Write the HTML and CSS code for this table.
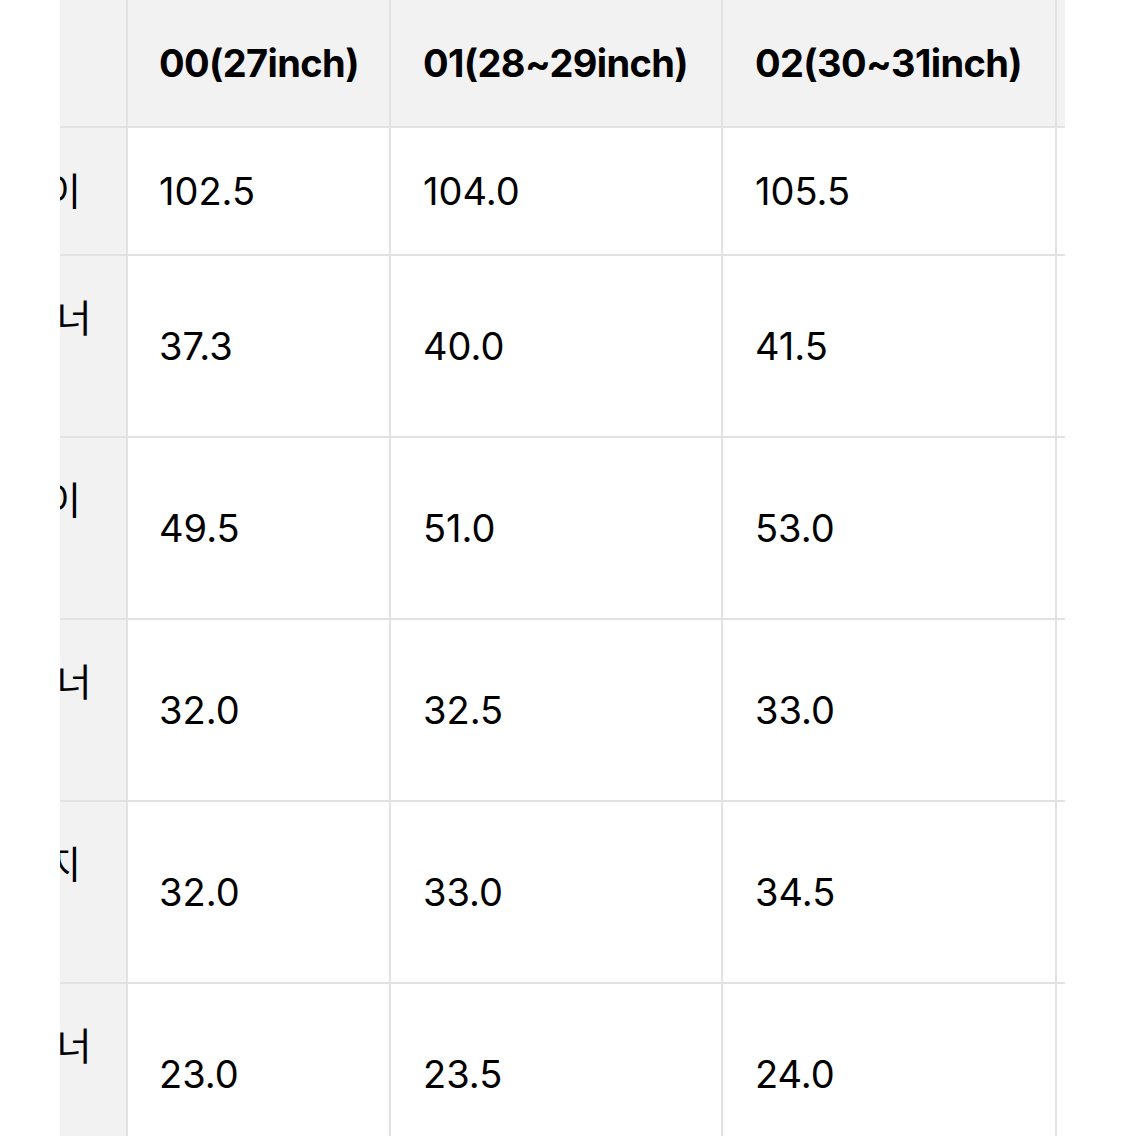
FILE: index.html
```html
<!DOCTYPE html>
<html lang="ko">
<head>
<meta charset="utf-8">
<title>사이즈 표</title>
<link rel="stylesheet" href="styles.css">
</head>
<body>
<div class="scroller">
  <table class="size-table">
    <thead>
      <tr class="row-head">
        <th class="col-label"></th>
        <th class="col-a">00(27inch)</th>
        <th class="col-b">01(28~29inch)</th>
        <th class="col-c">02(30~31inch)</th>
        <th class="col-d"></th>
      </tr>
    </thead>
    <tbody>
      <tr class="row-short">
        <th class="col-label">총길이</th>
        <td>102.5</td><td>104.0</td><td>105.5</td><td></td>
      </tr>
      <tr class="row-tall">
        <th class="col-label">허리 너비</th>
        <td>37.3</td><td>40.0</td><td>41.5</td><td></td>
      </tr>
      <tr class="row-tall">
        <th class="col-label">엉덩이 너비</th>
        <td>49.5</td><td>51.0</td><td>53.0</td><td></td>
      </tr>
      <tr class="row-tall">
        <th class="col-label">밑위 너비</th>
        <td>32.0</td><td>32.5</td><td>33.0</td><td></td>
      </tr>
      <tr class="row-tall">
        <th class="col-label">허벅지 너비</th>
        <td>32.0</td><td>33.0</td><td>34.5</td><td></td>
      </tr>
      <tr class="row-tall">
        <th class="col-label">밑단 너비</th>
        <td>23.0</td><td>23.5</td><td>24.0</td><td></td>
      </tr>
    </tbody>
  </table>
</div>
</body>
</html>
```
FILE: styles.css
```css
html, body {
  margin: 0;
  padding: 0;
  background: #ffffff;
}

body {
  font-family: Inter, "Noto Sans CJK KR", "Noto Sans", sans-serif;
  color: #000000;
  font-size: 38px;
}

.scroller {
  margin-left: 60px;
  width: 1005px;
  height: 1136px;
  overflow: hidden;
}

.size-table {
  border-collapse: separate;
  border-spacing: 0;
  table-layout: fixed;
  margin-left: -126px;
  width: 1294px;
}

.size-table th,
.size-table td {
  box-sizing: border-box;
  border-right: 2px solid #e2e2e2;
  border-bottom: 2px solid #e2e2e2;
  padding: 0 0 0 31px;
  text-align: left;
  vertical-align: middle;
  line-height: 55px;
  white-space: nowrap;
}

.size-table thead th {
  background: #f2f2f2;
  font-weight: 700;
  letter-spacing: -0.6px;
}

.size-table tbody td {
  font-weight: 400;
  background: #ffffff;
}

.size-table .col-label {
  width: 194px;
  padding: 0 18px 0 42px;
  background: #f2f2f2;
  font-weight: 400;
  white-space: normal;
  letter-spacing: 0;
}

.size-table .col-a { width: 263px; }
.size-table .col-b { width: 332px; padding-left: 32px; }
.size-table .col-c { width: 334px; padding-left: 32px; }
.size-table .col-d { width: 171px; }

.size-table tbody td:nth-child(3),
.size-table tbody td:nth-child(4) {
  padding-left: 32px;
}

.row-head th { height: 128px; }
.row-short th,
.row-short td { height: 128px; }
.row-tall th,
.row-tall td { height: 182px; }
```
